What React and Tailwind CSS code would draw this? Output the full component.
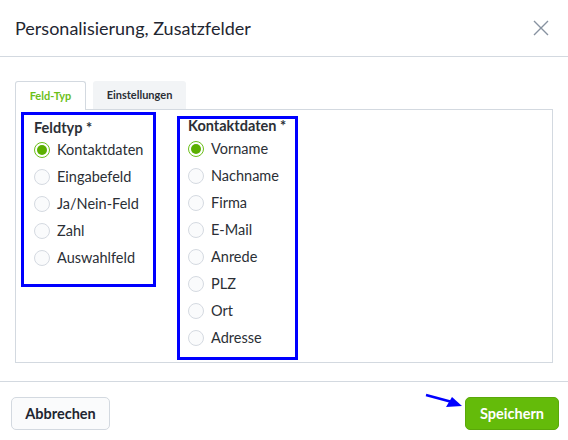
import React, { useState } from 'react';

const font = { fontFamily: 'Lato, "Noto Sans", sans-serif' };

const feldTypen = ['Kontaktdaten', 'Eingabefeld', 'Ja/Nein-Feld', 'Zahl', 'Auswahlfeld'];
const kontaktFelder = ['Vorname', 'Nachname', 'Firma', 'E-Mail', 'Anrede', 'PLZ', 'Ort', 'Adresse'];

// --- Radio row ---
const Radio = ({ label, checked, onClick }) => (
    <label onClick={onClick} className="flex items-center h-[27px] cursor-pointer">
        <span className={`w-[16px] h-[16px] rounded-full border flex items-center justify-center mr-[7px] ${checked ? 'border-[#6cbf1a]' : 'border-[#d5dae1] bg-[#fafbfc]'}`}>
            {checked && <span className="w-[10px] h-[10px] rounded-full bg-[#5bb000]" />}
        </span>
        <span className="text-[14.5px] text-[#2b2f36]">{label}</span>
    </label>
);

const App = () => {
    const [typ, setTyp] = useState('Kontaktdaten');
    const [feld, setFeld] = useState('Vorname');

    return (
        <div className="w-[568px] h-[440px] bg-white flex flex-col" style={font}>
            {/* Header */}
            <div className="h-[57px] flex items-center justify-between pl-[15px] pr-[19px] border-b border-[#d3d9e0]">
                <h2 className="text-[18px] text-[#1f2631]">Personalisierung, Zusatzfelder</h2>
                <svg width="16" height="16" viewBox="0 0 16 16" stroke="#8792a0" strokeWidth="1.4">
                    <path d="M1 1 L15 15 M15 1 L1 15" />
                </svg>
            </div>

            {/* Tabs + panel */}
            <div className="px-[15px] pt-[23px] h-[324px]">
                <div className="flex items-end gap-[7px] h-[29px]">
                    <div className="h-[29px] w-[71px] border border-b-0 border-[#d3d9e0] rounded-t-[3px] bg-white flex items-center justify-center text-[11px] font-bold text-[#6cbf1a] relative top-[1px]">Feld-Typ</div>
                    <div className="h-[28px] w-[93px] bg-[#f2f4f6] rounded-t-[3px] flex items-center justify-center text-[11px] font-bold text-[#2b2f36]">Einstellungen</div>
                </div>
                <div className="h-[254px] border border-[#d3d9e0] flex items-start gap-[21px] pl-[5px] pt-[2px]">
                    <div className="w-[135px] h-[175px] border-[3px] border-[#0000ff] pl-[10px] pt-[5px]">
                        <div className="text-[14.5px] font-bold text-[#2b2f36] h-[16px] leading-[16px]">Feldtyp *</div>
                        {feldTypen.map((t) => (
                            <Radio key={t} label={t} checked={typ === t} onClick={() => setTyp(t)} />
                        ))}
                    </div>
                    <div className="w-[121px] h-[244px] border-[3px] border-[#0000ff] pl-[8px] mt-[4px]">
                        <div className="text-[14.5px] font-bold text-[#2b2f36] h-[16px] leading-[14px]">Kontaktdaten *</div>
                        {kontaktFelder.map((f) => (
                            <Radio key={f} label={f} checked={feld === f} onClick={() => setFeld(f)} />
                        ))}
                    </div>
                </div>
            </div>

            {/* Footer */}
            <div className="border-t border-[#d3d9e0] flex items-center justify-between pl-[11px] pr-[9px] pt-[15px] relative">
                <button className="h-[33px] w-[99px] rounded-[5px] border border-[#d3d9e0] bg-[#fafbfc] text-[14.5px] font-bold text-[#1f2631]">Abbrechen</button>
                <svg className="absolute left-[424px] top-[11px]" width="40" height="16" viewBox="0 0 40 16">
                    <path d="M2 2 L28 9" stroke="#0000ff" strokeWidth="2.5" />
                    <path d="M38 13 L22 14 L28 4 Z" fill="#0000ff" />
                </svg>
                <button className="h-[33px] w-[94px] rounded-[5px] bg-[#64bb0a] border border-[#5aa80a] text-[14.5px] font-bold text-white">Speichern</button>
            </div>
        </div>
    );
};

export default App;
